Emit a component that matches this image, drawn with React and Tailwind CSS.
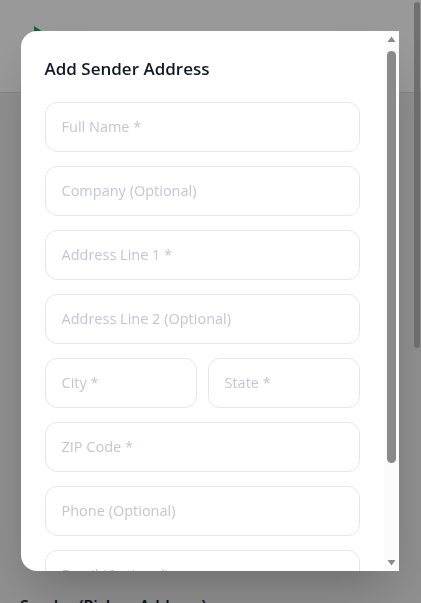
import React from "react";

const font = { fontFamily: '"Open Sans", "Noto Sans", sans-serif' };

function Field({ placeholder }) {
  return (
    <input
      placeholder={placeholder}
      className="w-full min-w-0 h-[50px] rounded-xl border border-[#e5e7eb] bg-white px-4 text-[14.5px] text-gray-800 placeholder:text-[#c2c7cf] outline-none"
    />
  );
}

export default function App() {
  return (
    <div className="h-[603px] overflow-hidden bg-[#eeeeee]" style={font}>
      <header className="h-[93px] bg-white border-b border-[#dddddd] flex items-start px-8 pt-[26px]">
        <svg width="20" height="20" viewBox="0 0 20 20">
          <path d="M2 0 L14 8 L2 16 Z" fill="#16a34a" />
        </svg>
      </header>
      <div className="px-5 pt-[501px]">
        <div className="text-base font-semibold text-gray-900">Sender (Pickup Address)</div>
      </div>

      <div className="fixed inset-0 bg-black/40 flex items-center justify-center">
        {/* page overlay scrollbar thumb */}
        <div className="absolute right-[1px] top-[2px] w-[6px] h-[346px] rounded-full bg-[#707070]" />

        <div className="w-[378px] h-[540px] -translate-x-[1px] -translate-y-[1px] bg-white rounded-l-2xl shadow-2xl flex overflow-hidden">
          <div className="flex-1 min-w-0 overflow-hidden">
            <div className="p-6">
              <h2 className="text-[17px] font-semibold text-[#111827] leading-7 mb-[19px]">Add Sender Address</h2>
              <div className="flex flex-col gap-[14px]">
                <Field placeholder="Full Name *" />
                <Field placeholder="Company (Optional)" />
                <Field placeholder="Address Line 1 *" />
                <Field placeholder="Address Line 2 (Optional)" />
                <div className="grid grid-cols-2 gap-[11px]">
                  <Field placeholder="City *" />
                  <Field placeholder="State *" />
                </div>
                <Field placeholder="ZIP Code *" />
                <Field placeholder="Phone (Optional)" />
                <Field placeholder="Email (Optional)" />
              </div>
              <div className="flex gap-3 mt-6">
                <button className="flex-1 h-11 rounded-xl border border-[#e5e7eb] text-sm font-semibold text-gray-700">Cancel</button>
                <button className="flex-1 h-11 rounded-xl bg-[#16a34a] text-sm font-semibold text-white">Save Address</button>
              </div>
            </div>
          </div>
          {/* modal scrollbar */}
          <div className="w-[15px] shrink-0 bg-[#fbfbfb] flex flex-col items-center">
            <svg width="9" height="12" viewBox="0 0 9 12" className="mt-[4px] shrink-0">
              <path d="M4.5 1.5 L8.5 7 L0.5 7 Z" fill="#8a8a8a" />
            </svg>
            <div className="mt-[4px] w-[9px] h-[412px] rounded-full bg-[#8a8a8a]" />
            <div className="flex-1" />
            <svg width="9" height="12" viewBox="0 0 9 12" className="mb-[4px] shrink-0">
              <path d="M0.5 5 L8.5 5 L4.5 10.5 Z" fill="#8a8a8a" />
            </svg>
          </div>
        </div>
      </div>
    </div>
  );
}
